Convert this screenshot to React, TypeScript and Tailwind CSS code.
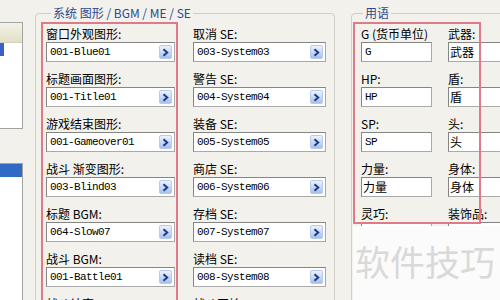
import React from "react";

const CJK = '"Noto Sans CJK SC", "Noto Sans", sans-serif';
const MONO = '"Liberation Mono", "Noto Sans CJK SC", monospace';

function Btn() {
  return (
    <div className="my-[2px] mr-[2px] w-[13px] shrink-0 flex items-center justify-center rounded-[2px] border border-[#b7cbec] bg-gradient-to-b from-[#eef3fc] to-[#a6c0ec]">
      <svg width="7" height="9" viewBox="0 0 7 9">
        <path d="M1.5 1.2 L5.2 4.5 L1.5 7.8" stroke="#1d3a8a" strokeWidth="2" fill="none" />
      </svg>
    </div>
  );
}

function Field({
  label,
  value,
  btn,
  cjkValue,
  w,
}: {
  label: string;
  value: string;
  btn?: boolean;
  cjkValue?: boolean;
  w: string;
}) {
  return (
    <div className={`flex flex-col ${w}`}>
      <div className="h-[15px] text-[12px] leading-[14px] text-black whitespace-nowrap" style={{ fontFamily: CJK }}>
        {label}
      </div>
      <div className="h-[20px] flex items-stretch bg-white border-t border-l border-[#858585] border-b border-r border-b-[#a9a9a9] border-r-[#a9a9a9]">
        {cjkValue ? (
          <span className="flex-1 pl-[1px] flex items-center text-[12px] text-black whitespace-nowrap" style={{ fontFamily: CJK }}>
            {value}
          </span>
        ) : (
          <span className="flex-1 pl-[3px] flex items-center text-[11px] tracking-[-0.6px] text-black whitespace-nowrap" style={{ fontFamily: MONO }}>
            {value}
          </span>
        )}
        {btn && <Btn />}
      </div>
    </div>
  );
}

const leftCol = [
  ["窗口外观图形:", "001-Blue01"],
  ["标题画面图形:", "001-Title01"],
  ["游戏结束图形:", "001-Gameover01"],
  ["战斗 渐变图形:", "003-Blind03"],
  ["标题 BGM:", "064-Slow07"],
  ["战斗 BGM:", "001-Battle01"],
  ["战斗结束 ME:", "001-Victory01"],
];

const midCol = [
  ["取消 SE:", "003-System03"],
  ["警告 SE:", "004-System04"],
  ["装备 SE:", "005-System05"],
  ["商店 SE:", "006-System06"],
  ["存档 SE:", "007-System07"],
  ["读档 SE:", "008-System08"],
  ["战斗开始 SE:", "009-System09"],
];

const termsA = [
  ["G (货币单位)", "G", false],
  ["HP:", "HP", false],
  ["SP:", "SP", false],
  ["力量:", "力量", true],
  ["灵巧:", "", true],
] as const;

const termsB = [
  ["武器:", "武器"],
  ["盾:", "盾"],
  ["头:", "头"],
  ["身体:", "身体"],
  ["装饰品:", ""],
];

export default function App() {
  return (
    <div className="relative w-[500px] h-[300px] overflow-hidden bg-[#f2f1ec] flex items-start" style={{ fontFamily: CJK }}>
      {/* left list panels */}
      <div className="w-[23px] shrink-0 flex flex-col">
        <div className="mt-[22px] h-[107px] bg-white border-t border-r border-b border-[#a3a3a3] flex flex-col">
          <div className="h-[20px] bg-gradient-to-b from-[#f4f2e6] to-[#e3e0c8] border-b border-[#d4d1b9]" />
          <div className="h-[13px] w-[4px] bg-[#3564c4]" />
        </div>
        <div className="mt-[34px] h-[200px] bg-white border-t border-r border-[#a3a3a3]">
          <div className="h-[13px] bg-[#316ac5]" />
        </div>
      </div>

      {/* system group */}
      <fieldset className="ml-[12px] mt-[7px] w-[300px] h-[320px] shrink-0 border border-[#cfcfc6] rounded-[4px] pl-[10px] pt-[8px]">
        <legend className="ml-[5px] px-[2px] text-[12px] leading-[12px] text-[#2c4a8c] whitespace-nowrap">
          系统 图形 / BGM / ME / SE
        </legend>
        <div className="flex gap-[18px]">
          <div className="flex flex-col gap-[10px]">
            {leftCol.map(([l, v]) => (
              <Field key={l} label={l} value={v} btn w="w-[129px]" />
            ))}
          </div>
          <div className="flex flex-col gap-[10px]">
            {midCol.map(([l, v]) => (
              <Field key={l} label={l} value={v} btn w="w-[133px]" />
            ))}
          </div>
        </div>
      </fieldset>

      {/* terms group */}
      <fieldset className="ml-[16px] mt-[7px] w-[180px] h-[320px] shrink-0 border border-[#cfcfc6] rounded-[4px] pl-[9px] pt-[8px]">
        <legend className="ml-[2px] px-[2px] text-[12px] leading-[12px] text-[#2c4a8c] whitespace-nowrap">用语</legend>
        <div className="flex gap-[16px]">
          <div className="flex flex-col gap-[10px]">
            {termsA.map(([l, v, c]) => (
              <Field key={l} label={l} value={v} cjkValue={c} w="w-[71px]" />
            ))}
          </div>
          <div className="flex flex-col gap-[10px]">
            {termsB.map(([l, v]) => (
              <Field key={l} label={l} value={v} cjkValue w="w-[80px]" />
            ))}
          </div>
        </div>
      </fieldset>

      {/* red annotation boxes */}
      <div className="absolute left-[41px] top-[22px] w-[137px] h-[290px] border-2 border-[#e07a88]" />
      <div className="absolute left-[353px] top-[22px] w-[128px] h-[202px] border-2 border-[#e07a88]" />

      {/* watermark */}
      <div className="absolute left-[353px] top-[226px] w-[147px] h-[74px] bg-[#fbfbfb] pl-[2px] pt-[17px]">
        <div className="text-[35px] leading-[35px] text-[#d9d9d9] whitespace-nowrap">软件技巧</div>
      </div>
    </div>
  );
}
